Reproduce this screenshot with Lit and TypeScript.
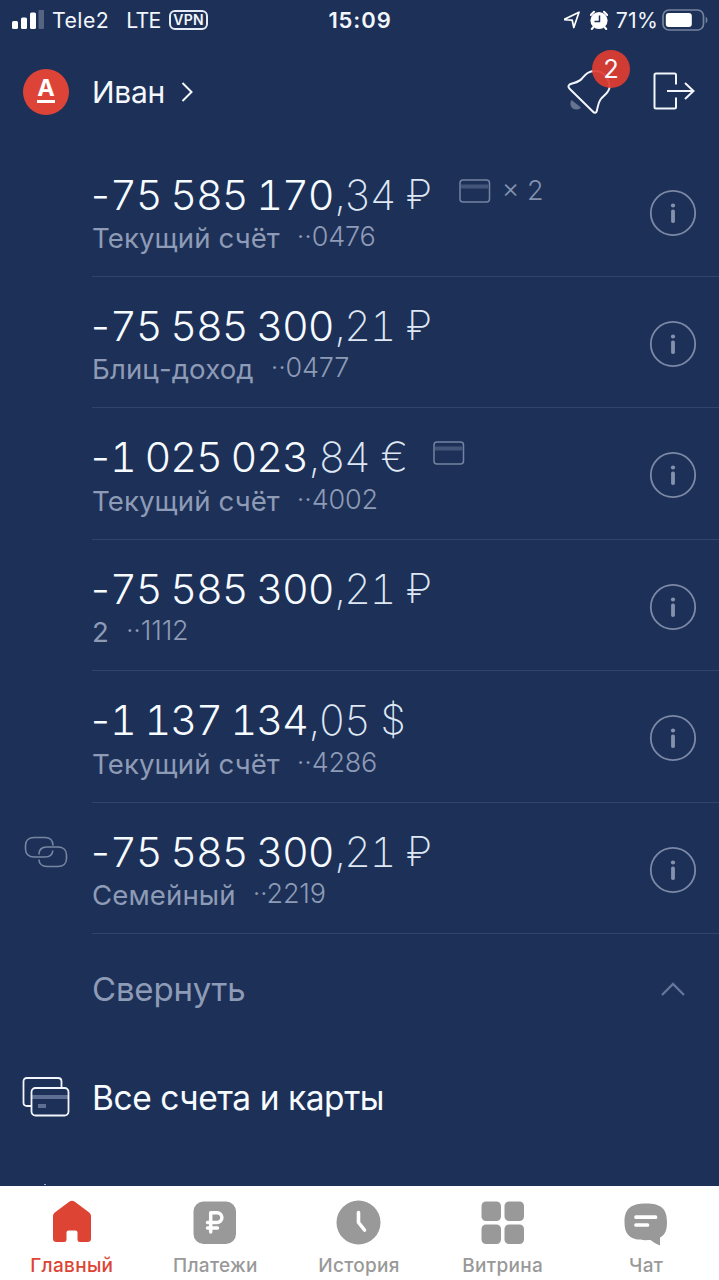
import { LitElement, html, svg, css, nothing } from "lit";
import { customElement, property } from "lit/decorators.js";

interface Account {
  whole: string;
  cents: string;
  sign: string;
  name: string;
  tail: string;
  cards: number;
  linked?: boolean;
}

const accounts: Account[] = [
  { whole: "75 585 170", cents: ",34", sign: "₽", name: "Текущий счёт", tail: "··0476", cards: 2 },
  { whole: "75 585 300", cents: ",21", sign: "₽", name: "Блиц-доход", tail: "··0477", cards: 0 },
  { whole: "1 025 023", cents: ",84", sign: "€", name: "Текущий счёт", tail: "··4002", cards: 1 },
  { whole: "75 585 300", cents: ",21", sign: "₽", name: "2", tail: "··1112", cards: 0 },
  { whole: "1 137 134", cents: ",05", sign: "$", name: "Текущий счёт", tail: "··4286", cards: 0 },
  { whole: "75 585 300", cents: ",21", sign: "₽", name: "Семейный", tail: "··2219", cards: 0, linked: true },
];

const cardIcon = html`<svg class="card" width="32" height="24" viewBox="0 0 32 24">
  <rect x="1" y="1" width="29.5" height="22" rx="3" fill="none" stroke="#7483a3" stroke-width="1.5" />
  <rect x="2" y="5.5" width="27.5" height="4" fill="#435579" />
</svg>`;

@customElement("status-bar")
class StatusBar extends LitElement {
  static styles = css`
    :host {
      display: grid;
      grid-template-columns: 1fr auto 1fr;
      align-items: center;
      height: 40px;
      padding: 0 11px 0 12px;
      color: #f2f6fc;
      font-size: 21.3px;
      line-height: 40px;
    }
    .side { display: flex; align-items: center; }
    .end { justify-content: flex-end; }
    .carrier { margin-left: 7px; letter-spacing: 0.42px; }
    .net { margin-left: 17px; letter-spacing: -0.7px; }
    .vpn {
      margin-left: 8.5px;
      box-sizing: border-box;
      width: 39px;
      height: 20px;
      border: 2px solid #e6ecf6;
      border-radius: 6px;
      font-size: 14px;
      font-weight: 600;
      line-height: 16px;
      text-align: center;
      letter-spacing: 0.3px;
    }
    .time { font-weight: 600; font-size: 22px; letter-spacing: 0.9px; }
    .pct { margin: 0 4px 0 8px; letter-spacing: 0.2px; }
    svg { display: block; }
    .alarm { margin-left: 8px; }
  `;
  render() {
    return html`
      <div class="side">
        <svg width="33" height="20" viewBox="0 0 33 20" fill="#fff">
          <rect x="0" y="11" width="6" height="8" rx="1.5" />
          <rect x="9" y="7.5" width="6" height="11.5" rx="1.5" />
          <rect x="18" y="2.5" width="6" height="16.5" rx="1.5" />
          <rect x="26.5" y="-1" width="5.5" height="20" rx="1.5" opacity=".25" />
        </svg>
        <span class="carrier">Tele2</span><span class="net">LTE</span><span class="vpn">VPN</span>
      </div>
      <div class="time">15:09</div>
      <div class="side end">
        <svg width="18" height="20" viewBox="0 0 18 20">
          <path d="M-0.5 9.7L15 2.2L9.8 17.5L8.2 10.2Z" fill="none" stroke="#fff" stroke-width="1.7" stroke-linejoin="round" />
        </svg>
        <svg class="alarm" width="18" height="21" viewBox="1 0 18 21">
          <path d="M1.8 5L5 1.8M18.2 5L15 1.8M4.5 17L2.8 19M15.5 17L17.2 19" stroke="#fff" stroke-width="2" stroke-linecap="round" />
          <circle cx="10" cy="10.5" r="8.6" fill="#fff" />
          <path d="M10.5 5.5V11.5H5.5" fill="none" stroke="#1d3057" stroke-width="1.5" />
        </svg>
        <span class="pct">71%</span>
        <svg width="46" height="22" viewBox="0 0 46 22">
          <rect x="1" y="1" width="40.5" height="20" rx="6" fill="none" stroke="#75839e" stroke-width="1.7" />
          <rect x="3.8" y="4" width="26" height="14" rx="3" fill="#fff" />
          <path d="M43.7 7.5Q45.5 9 45.5 11T43.7 14.5Z" fill="#75839e" />
        </svg>
      </div>
    `;
  }
}

@customElement("top-header")
class TopHeader extends LitElement {
  static styles = css`
    :host {
      display: flex;
      align-items: center;
      height: 105.5px;
      padding: 0 23px 2px;
      box-sizing: border-box;
      color: #f4f8fe;
    }
    svg { display: block; overflow: visible; }
    .logo {
      width: 46px;
      height: 46px;
      border-radius: 50%;
      background: #dd4437;
      display: flex;
      flex-direction: column;
      align-items: center;
      color: #fff;
    }
    .logo b { font-size: 23.5px; line-height: 18px; margin-top: 10px; font-weight: 700; }
    .logo i { width: 18px; height: 3px; background: #fff; margin-top: 3px; }
    .user { margin-left: 23px; font-size: 30px; line-height: 36px; letter-spacing: -0.3px; }
    .chev { margin-left: 16px; }
    .bell { position: relative; margin-left: auto; }
    .badge {
      position: absolute;
      left: 25px;
      top: -20px;
      width: 38px;
      height: 38px;
      border-radius: 50%;
      background: rgba(222, 60, 49, 0.93);
      font-size: 25.5px;
      line-height: 38px;
      text-align: center;
    }
    .exit { margin: -1px 0 0 42px; }
  `;
  render() {
    return html`
      <div class="logo"><b>А</b><i></i></div>
      <div class="user">Иван</div>
      <svg class="chev" width="12" height="22" viewBox="0 0 12 22">
        <path d="M1.5 2L10.5 11L1.5 20" fill="none" stroke="#f4f8fe" stroke-width="2" />
      </svg>
      <div class="bell">
        <svg width="44" height="44" viewBox="0 0 44 44">
          <path d="M4.5 30C1.5 34.500 5 40 10 39.500Q12.500 39.300 14 37.500Z" fill="#64738f" />
          <path d="M2.600 14.500C1 15.500 1.200 17.500 2.600 18.700L26.300 42C27.500 43.300 29.300 43 29.700 41.300C31 36.500 31 33 33.500 29.500C37.500 24.500 42.500 22.500 42.500 17C42.500 9 37 1 28 1C21 1 18.500 4.500 15 8.500C11.500 12.700 7 12.500 2.600 14.500Z" fill="none" stroke="#f2f6fc" stroke-width="2" />
        </svg>
        <div class="badge">2</div>
      </div>
      <svg class="exit" width="43" height="38" viewBox="0 0 43 38">
        <path d="M23 12.500V3Q23 1.500 21.500 1.500H3Q1.500 1.500 1.500 3V35Q1.500 36.500 3 36.500H21.500Q23 36.500 23 35V25.500M14 19H40.500M32 11L40.500 19L32 27" fill="none" stroke="#f2f6fc" stroke-width="2" />
      </svg>
    `;
  }
}

@customElement("account-row")
class AccountRow extends LitElement {
  @property({ attribute: false }) account!: Account;
  static styles = css`
    :host {
      display: grid;
      grid-template-columns: 92px 1fr;
      height: 131.45px;
    }
    svg { display: block; }
    .link { padding: 33px 0 0 24px; }
    .body {
      display: flex;
      justify-content: space-between;
      border-bottom: 1px solid #31456c;
    }
    .money {
      display: flex;
      height: 50px;
      margin-top: 24px;
      font-size: 41.5px;
      line-height: 50px;
      font-weight: 300;
      color: #f6fbff;
    }
    .minus { width: 19px; margin-left: -1px; }
    .whole, .cents { font-feature-settings: "tnum"; white-space: pre; }
    .whole { letter-spacing: -1.15px; word-spacing: -1.1px; }
    .cents, .sign { font-weight: 200; color: #dfe7f4; }
    .cents { margin-left: 1px; letter-spacing: -1.3px; }
    .sign { margin-left: 11px; width: 24.5px; font-size: 40.5px; }
    .cards {
      display: flex;
      height: 24px;
      margin: 9px 0 0 28px;
      color: #8492af;
      font-size: 27px;
      line-height: 24px;
    }
    .cards span { margin-left: 11px; }
    .sub {
      display: flex;
      gap: 17px;
      margin-top: 1.5px;
      color: #8e9bb6;
      font-size: 27.6px;
      line-height: 34px;
    }
    .name { letter-spacing: 0.1px; }
    .tail { font-weight: 300; position: relative; top: -1px; font-size: 27px; letter-spacing: -0.2px; }
    .info { margin: 43px 22px 0 0; }
  `;
  render() {
    const a = this.account;
    return html`
      <div class="link">
        ${a.linked
          ? html`<svg width="44" height="33" viewBox="0 0 44 33" fill="none" stroke="#7886a4" stroke-width="1.6">
              <path d="M29 9.500C29 4.500 26 1.500 21 1.500H10C5 1.500 1.500 4.500 1.500 9.500V13C1.500 18 5 21 10 21H21C26 21 28.500 19 28.800 14.500" />
              <path d="M15 18.500C15 13.500 18 11 22.500 11H34C39 11 42.500 14 42.500 19V22.500C42.500 27.500 39 30.500 34 30.500H23C18 30.500 15 27.500 15 23.500" />
            </svg>`
          : nothing}
      </div>
      <div class="body">
        <div>
          <div class="money">
            <span class="minus">-</span><span class="whole">${a.whole}</span><span class="cents">${a.cents}</span><span class="sign">${a.sign}</span>
            ${a.cards ? html`<div class="cards">${cardIcon}${a.cards > 1 ? html`<span>× ${a.cards}</span>` : nothing}</div>` : nothing}
          </div>
          <div class="sub"><span class="name">${a.name}</span><span class="tail">${a.tail}</span></div>
        </div>
        <svg class="info" width="48" height="48" viewBox="0 0 48 48">
          <circle cx="24" cy="24" r="22.200" fill="none" stroke="#7b89a6" stroke-width="1.8" />
          <circle cx="24" cy="16.500" r="2.100" fill="#8492ae" />
          <rect x="22.100" y="20.500" width="3.800" height="13.500" rx="1.700" fill="#8492ae" />
        </svg>
      </div>
    `;
  }
}

const tabs = [
  {
    label: "Главный",
    icon: svg`<path fill="#dd4434" d="M4 16Q4 14 5.500 12.800L20.500 1.500Q23 -.2 25.500 1.500L40.500 12.800Q42 14 42 16V38.500Q42 42 38.500 42H31Q28.500 42 28.500 39.500V32.500Q28.500 30.500 26.500 30.500H19.500Q17.500 30.500 17.500 32.500V39.500Q17.500 42 15 42H7.500Q4 42 4 38.500Z"/>`,
  },
  {
    label: "Платежи",
    icon: svg`<rect x="1.500" y="1.500" width="42.500" height="42.500" rx="10" fill="#999"/><path d="M18.700 32V12.700H25A4.900 4.900 0 0 1 25 22.500H15.500M15.500 28H25.500" fill="none" stroke="#fff" stroke-width="3.500" stroke-linecap="round" stroke-linejoin="round"/>`,
  },
  {
    label: "История",
    icon: svg`<circle cx="22.500" cy="22.500" r="22" fill="#999"/><path d="M22.500 12.500V22.500L28.500 30" fill="none" stroke="#fff" stroke-width="3.600" stroke-linecap="round" stroke-linejoin="round"/>`,
  },
  {
    label: "Витрина",
    icon: svg`<g fill="#999"><rect x="1.500" y="1.500" width="19.500" height="19.500" rx="4.500"/><rect x="24.500" y="1.500" width="19.500" height="19.500" rx="4.500"/><rect x="1.500" y="24.500" width="19.500" height="19.500" rx="4.500"/><rect x="24.500" y="24.500" width="19.500" height="19.500" rx="4.500"/></g>`,
  },
  {
    label: "Чат",
    icon: svg`<path d="M1.500 22C1.500 9 7.500 3.500 23 3.500S44 9 44 22C44 30.500 42 35 37 37.500V45.500Q31.500 43.500 27.500 40C8.500 41 1.500 36.500 1.500 22Z" fill="#999"/><path d="M13 17.200H32.500M13 25H24.500" stroke="#fff" stroke-width="3.700" stroke-linecap="round"/>`,
  },
];

@customElement("tab-bar")
class TabBar extends LitElement {
  static styles = css`
    :host {
      display: grid;
      grid-template-columns: repeat(5, 1fr);
      height: 94px;
      padding-right: 1px;
      box-sizing: border-box;
      background: #fff;
      color: #999;
      font-size: 19px;
      font-weight: 500;
      line-height: 24px;
      letter-spacing: 0.3px;
    }
    .tab {
      display: flex;
      flex-direction: column;
      align-items: center;
      gap: 7px;
      padding-top: 14px;
    }
    .on { color: #dd4434; }
    svg { display: block; height: 46px; width: 46px; }
    .tab span { margin-top: 1px; }
  `;
  render() {
    return tabs.map(
      (t, i) => html`<div class="tab ${i === 0 ? "on" : ""}"><svg viewBox="0 0 46 46">${t.icon}</svg><span>${t.label}</span></div>`
    );
  }
}

@customElement("app-root")
class AppRoot extends LitElement {
  static styles = css`
    :host {
      display: flex;
      flex-direction: column;
      height: 1280px;
      overflow: hidden;
      background: #1d3057;
      font-family: Inter, "Liberation Sans", sans-serif;
    }
    svg { display: block; }
    .content { flex: 1; min-height: 0; overflow: hidden; }
    .collapse {
      display: flex;
      align-items: center;
      justify-content: space-between;
      height: 109px;
      padding: 0 33px 0 92px;
      color: #8e9bb6;
      font-size: 33px;
      letter-spacing: -0.2px;
    }
    .all {
      display: flex;
      align-items: center;
      height: 107px;
      padding-left: 22px;
      gap: 22px;
      color: #f6fbff;
      font-size: 33.5px;
      letter-spacing: -0.45px;
    }
    .all span { padding-top: 2px; }
    .peek { width: 2px; height: 1px; margin: 34px 0 0 44px; background: #9aa8c2; }
  `;
  render() {
    return html`
      <status-bar></status-bar>
      <top-header></top-header>
      <div class="content">
        ${accounts.map((a) => html`<account-row .account=${a}></account-row>`)}
        <div class="collapse">
          <span>Свернуть</span>
          <svg width="26" height="16" viewBox="0 0 26 16">
            <path d="M2 14L13 3L24 14" fill="none" stroke="#65769a" stroke-width="2.3" />
          </svg>
        </div>
        <div class="all">
          <svg width="48" height="40" viewBox="0 0 48 40">
            <path d="M9 29H5Q1.500 29 1.500 25.500V4.500Q1.500 1 5 1H36Q39.500 1 39.500 4.500V10" fill="none" stroke="#f2f6fc" stroke-width="1.8" />
            <rect x="10" y="18" width="36" height="4" fill="#5f6f93" />
            <rect x="16" y="27" width="8" height="4" fill="#5f6f93" />
            <rect x="9.500" y="11" width="37" height="27.500" rx="4" fill="none" stroke="#f2f6fc" stroke-width="1.8" />
          </svg>
          <span>Все счета и карты</span>
        </div>
        <div class="peek"></div>
      </div>
      <tab-bar></tab-bar>
    `;
  }
}
